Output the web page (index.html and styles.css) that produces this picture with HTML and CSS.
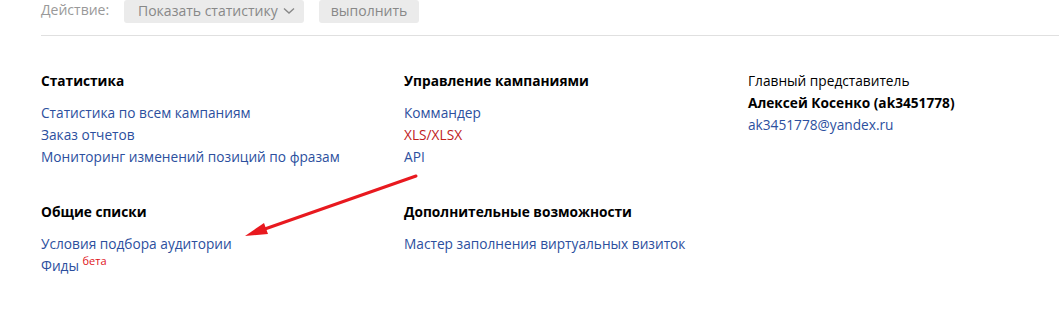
FILE: index.html
```html
<!DOCTYPE html>
<html lang="ru">
<head>
    <meta charset="UTF-8">
    <meta name="viewport" content="width=device-width, initial-scale=1.0">
    <title>Инструменты</title>
    <link rel="stylesheet" href="styles.css">
</head>
<body>
    <div class="page">
        <div class="action-bar">
            <span class="action-label">Действие:</span>
            <button class="btn btn-select">Показать статистику
                <svg class="chevron" width="12" height="8" viewBox="0 0 12 8"><path d="M1 1.5 L6 6 L11 1.5" fill="none" stroke="#888" stroke-width="1.4"/></svg>
            </button>
            <button class="btn btn-run">выполнить</button>
        </div>

        <div class="tools">
            <div class="block">
                <h3>Статистика</h3>
                <ul>
                    <li><a href="#">Статистика по всем кампаниям</a></li>
                    <li><a href="#">Заказ отчетов</a></li>
                    <li><a href="#">Мониторинг изменений позиций по фразам</a></li>
                </ul>
            </div>
            <div class="block">
                <h3>Управление кампаниями</h3>
                <ul>
                    <li><a href="#">Коммандер</a></li>
                    <li><a href="#" class="red">XLS/XLSX</a></li>
                    <li><a href="#">API</a></li>
                </ul>
            </div>
            <div class="block rep">
                <p>Главный представитель</p>
                <p><b>Алексей Косенко (ak3451778)</b></p>
                <p><a href="#">ak3451778@yandex.ru</a></p>
            </div>
            <div class="block">
                <h3>Общие списки</h3>
                <ul>
                    <li><a href="#">Условия подбора аудитории</a></li>
                    <li><a href="#">Фиды</a> <sup class="beta">бета</sup></li>
                </ul>
            </div>
            <div class="block">
                <h3>Дополнительные возможности</h3>
                <ul>
                    <li><a href="#">Мастер заполнения виртуальных визиток</a></li>
                </ul>
            </div>
        </div>

        <!-- стрелка-пометка поверх страницы -->
        <svg class="arrow" width="1059" height="332" viewBox="0 0 1059 332">
            <line x1="416" y1="176" x2="262" y2="230" stroke="#e8191f" stroke-width="3" stroke-linecap="round"/>
            <polygon points="245,236 264,223 268,234" fill="#e8191f"/>
        </svg>
    </div>
</body>
</html>
```

FILE: styles.css
```css
body {
    margin: 0;
    font-family: "Open Sans", Arial, sans-serif;
    font-size: 13.7px;
    color: #000;
    background: #fff;
}
.page {
    position: relative;
    height: 332px;
    overflow: hidden;
}
.action-bar {
    display: flex;
    align-items: flex-start;
    height: 23px;
    margin-left: 41px;
    padding-bottom: 12px;
    border-bottom: 1px solid #e0e0e0;
}
.action-label {
    color: #999;
    width: 83px;
    font-size: 14px;
    line-height: 20px;
}
.btn {
    font-family: inherit;
    font-size: 14px;
    color: #888;
    background: #ebebeb;
    border: none;
    border-radius: 3px;
    height: 23px;
    padding: 0 8px 3px 14px;
    display: flex;
    align-items: center;
    gap: 5px;
    white-space: nowrap;
}
.btn-select {
    width: 180px;
}
.btn-run {
    width: 100px;
    padding: 0 0 3px;
    justify-content: center;
    margin-left: 15px;
}
.chevron {
    margin-top: 1px;
}
.tools {
    display: grid;
    grid-template-columns: 363px 344px 1fr;
    row-gap: 33px;
    padding: 34px 0 0 41px;
}
.block h3 {
    margin: 0 0 10px;
    font-size: 13.7px;
    font-weight: 700;
    line-height: 22px;
}
.block ul {
    list-style: none;
    margin: 0;
    padding: 0;
}
.block li {
    line-height: 22px;
}
.block a {
    color: #2c4f9e;
    text-decoration: none;
}
.block a.red {
    color: #c0201b;
}
.beta {
    color: #e0131b;
    font-size: 11px;
    vertical-align: 6px;
    line-height: 0;
}
.rep p {
    margin: 0;
    line-height: 22px;
}
.arrow {
    position: absolute;
    top: 0;
    left: 0;
    pointer-events: none;
}
```
